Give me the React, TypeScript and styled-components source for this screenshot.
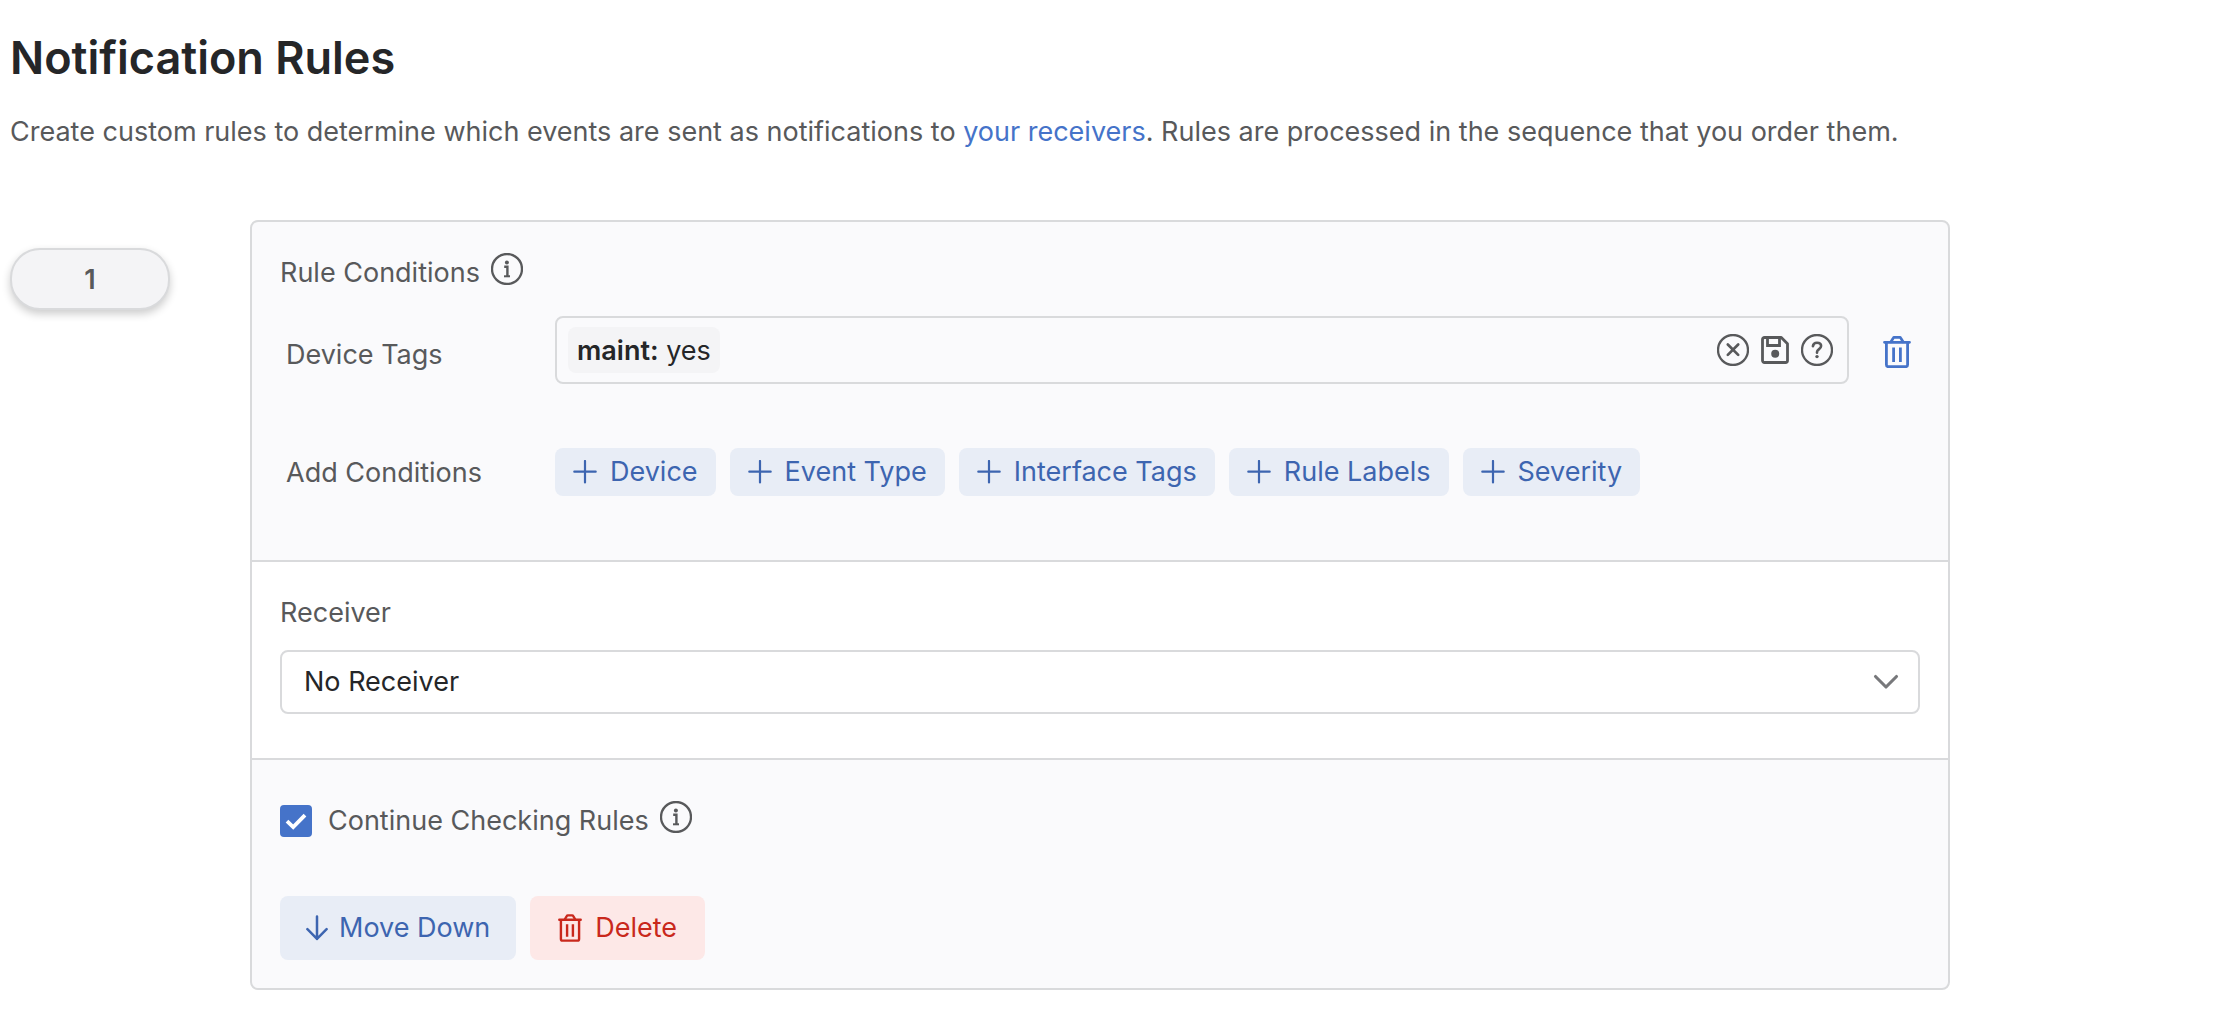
import React, { useState } from "react";
import styled, { createGlobalStyle } from "styled-components";

const color = {
  ink: "#252628",
  text: "#58595b",
  line: "#d9dadc",
  panel: "#fafafc",
  blue: "#4573c9",
  blueText: "#3d65b0",
  blueFill: "#e8edf6",
  redText: "#c9281c",
  redFill: "#fde8e7",
};

const GlobalStyle = createGlobalStyle`
  * { box-sizing: border-box; }
  body {
    margin: 0;
    background: #fff;
    color: ${color.text};
    font-family: Inter, "Liberation Sans", sans-serif;
    font-size: 27px;
    line-height: 40px;
  }
  button, input, select { font: inherit; color: inherit; margin: 0; }
  svg { display: block; flex: none; }
`;

const Page = styled.main`
  padding: 28px 10px;
`;

const Title = styled.h1`
  margin: 0;
  color: ${color.ink};
  font-size: 45px;
  font-weight: 600;
  line-height: 60px;
`;

const Intro = styled.p`
  margin: 24px 0 68px;
`;

const Link = styled.a`
  color: ${color.blue};
  text-decoration: none;
`;

const Rule = styled.article`
  display: flex;
  align-items: flex-start;
  gap: 80px;
`;

const Order = styled.div`
  flex: 0 0 160px;
  margin-top: 28px;
  padding: 10px 10px 8px;
  border: 2px solid ${color.line};
  border-radius: 30px;
  background: #f4f4f6;
  box-shadow: 0 4px 8px rgba(0, 0, 0, 0.2);
  text-align: center;
  font-weight: 600;
`;

const Card = styled.div`
  flex: 1 1 0;
  max-width: 1700px;
  border: 2px solid ${color.line};
  border-radius: 8px;
  background: ${color.panel};
`;

const Section = styled.section<{ $white?: boolean; $pad: string }>`
  padding: ${(p) => p.$pad};
  background: ${(p) => (p.$white ? "#fff" : "transparent")};
  & + & { border-top: 2px solid ${color.line}; }
`;

const Heading = styled.div`
  display: flex;
  align-items: flex-start;
  gap: 11px;
`;

const Row = styled.div<{ $top: number }>`
  display: flex;
  align-items: center;
  margin-top: ${(p) => p.$top}px;
  padding-left: 6px;
`;

const RowLabel = styled.label<{ $drop?: boolean }>`
  flex: 0 0 269px;
  padding-top: ${(p) => (p.$drop ? 10 : 2)}px;
`;

const TagBox = styled.div`
  flex: 1;
  display: flex;
  align-items: center;
  gap: 10px;
  height: 68px;
  padding: 0 14px 0 11px;
  border: 2px solid ${color.line};
  border-radius: 8px;
`;

const Tag = styled.span`
  padding: 4px 9px 2px;
  border-radius: 8px;
  background: #f4f4f6;
  color: ${color.ink};
  b { font-weight: 600; }
`;

const TagInput = styled.input`
  flex: 1;
  min-width: 0;
  border: 0;
  outline: 0;
  background: transparent;
`;

const IconButton = styled.button`
  display: grid;
  place-items: center;
  width: 32px;
  height: 32px;
  padding: 0;
  border: 0;
  background: none;
  color: ${color.text};
  cursor: pointer;
`;

const RemoveButton = styled(IconButton)`
  width: 47px;
  height: 36px;
  margin-left: 24px;
  padding-top: 4px;
  color: ${color.blue};
`;

const Buttons = styled.div<{ $top?: number }>`
  display: flex;
  flex-wrap: wrap;
  gap: 14px;
  margin-top: ${(p) => p.$top ?? 0}px;
`;

const Button = styled.button<{ $danger?: boolean; $large?: boolean }>`
  display: flex;
  align-items: center;
  gap: ${(p) => (p.$danger ? 13 : p.$large ? 11 : 13)}px;
  height: ${(p) => (p.$large ? 64 : 48)}px;
  padding: 0 ${(p) => (p.$danger ? 28 : p.$large ? 26 : 18)}px;
  border: 0;
  border-radius: 8px;
  background: ${(p) => (p.$danger ? color.redFill : color.blueFill)};
  color: ${(p) => (p.$danger ? color.redText : color.blueText)};
  cursor: pointer;
`;

const SelectWrap = styled.div`
  position: relative;
  margin-top: 17px;
  color: #77787b;
  svg {
    position: absolute;
    top: 24px;
    right: 21px;
    pointer-events: none;
  }
`;

const Select = styled.select`
  appearance: none;
  display: block;
  width: 100%;
  height: 64px;
  padding: 0 60px 0 22px;
  border: 2px solid ${color.line};
  border-radius: 8px;
  background: #fff;
  color: ${color.ink};
`;

const CheckLabel = styled.label`
  display: flex;
  align-items: center;
  gap: 16px;
`;

const CheckBox = styled.span`
  display: grid;
  place-items: center;
  color: #fff;
  > * { grid-area: 1 / 1; }
  svg { pointer-events: none; }
`;

const Check = styled.input`
  appearance: none;
  width: 32px;
  height: 32px;
  border: 2px solid ${color.blue};
  border-radius: 4px;
  background: #fff;
  &:checked { background: ${color.blue}; }
`;

const stroke = {
  fill: "none",
  stroke: "currentColor",
  strokeWidth: 2,
  strokeLinecap: "round" as const,
  strokeLinejoin: "round" as const,
  "aria-hidden": true,
};

const InfoIcon = () => (
  <svg width="32" height="32" viewBox="0 0 32 32" {...stroke}>
    <circle cx="16" cy="16" r="15" strokeWidth="2.3" />
    <circle cx="15.9" cy="9.6" r="2" fill="currentColor" stroke="none" />
    <path d="M13.2 13.7h3.2v9.4" strokeLinecap="butt" strokeLinejoin="miter" strokeWidth="2.4" />
    <path d="M13 23.3h6" strokeLinecap="butt" strokeWidth="2" />
  </svg>
);

const ClearIcon = () => (
  <svg width="32" height="32" viewBox="0 0 32 32" {...stroke}>
    <circle cx="16" cy="16" r="15" strokeWidth="2.3" />
    <path d="M10.8 10.5l10.4 10.4M21.2 10.5L10.8 20.9" strokeWidth="2.7" />
  </svg>
);

const SaveIcon = () => (
  <svg width="28" height="28" viewBox="0 0 28 28" {...stroke} strokeWidth="2.8">
    <path d="M1.5 3.5a2 2 0 0 1 2-2h16.8l6.2 6.2v16.8a2 2 0 0 1-2 2h-21a2 2 0 0 1-2-2z" />
    <path d="M6.5 1.8v7.7h12V1.8" strokeLinejoin="miter" />
    <circle cx="14.2" cy="17.8" r="4" fill="currentColor" stroke="none" />
  </svg>
);

const HelpIcon = () => (
  <svg width="32" height="32" viewBox="0 0 32 32" {...stroke}>
    <circle cx="16" cy="16" r="15" strokeWidth="2.3" />
    <path d="M11.9 12.2c.3-2.2 1.9-3.4 4.1-3.4 2.4 0 4.1 1.3 4.1 3.3 0 3-4.1 3-4.1 6v.6" strokeWidth="2.6" />
    <circle cx="16" cy="22.6" r="1.7" fill="currentColor" stroke="none" />
  </svg>
);

const TrashIcon = ({ width = 28, height = 32 }: { width?: number; height?: number }) => (
  <svg width={width} height={height} viewBox="0 0 28 32" {...stroke} strokeWidth="2.8">
    <path d="M1.5 6.3h25M3.4 6.5v22.2a2 2 0 0 0 2 2h17.2a2 2 0 0 0 2-2V6.5" />
    <path d="M8 5.8l2.2-3.7a1.5 1.5 0 0 1 1.3-.8h5a1.5 1.5 0 0 1 1.3.8L20 5.8" />
    <path d="M10.6 11.5v14.6M17.4 11.5v14.6" strokeLinecap="butt" />
  </svg>
);

const PlusIcon = () => (
  <svg width="24" height="24" viewBox="0 0 24 24" {...stroke} strokeWidth="2.2">
    <path d="M12 1v21.4M1.3 11.7h21.4" />
  </svg>
);

const ArrowDownIcon = () => (
  <svg width="22" height="26" viewBox="0 0 22 26" {...stroke} strokeWidth="2.5">
    <path d="M11 1.5v22.5M1.4 14.2L11 23.8l9.6-9.6" />
  </svg>
);

const ChevronIcon = () => (
  <svg width="26" height="16" viewBox="0 0 26 16" {...stroke} strokeWidth="3.1">
    <path d="M2.5 2.5L13 13 23.5 2.5" />
  </svg>
);

const CheckIcon = () => (
  <svg width="32" height="32" viewBox="0 0 32 32" {...stroke} strokeWidth="3.8" strokeLinecap="butt" strokeLinejoin="miter">
    <path d="M7 16.2l6.2 5.9L25 10.2" />
  </svg>
);

const conditions = ["Device", "Event Type", "Interface Tags", "Rule Labels", "Severity"];

export default function App() {
  const [keepChecking, setKeepChecking] = useState(true);

  return (
    <>
      <GlobalStyle />
      <Page>
        <Title>Notification Rules</Title>
        <Intro>
          Create custom rules to determine which events are sent as notifications to{" "}
          <Link href="#receivers">your receivers</Link>. Rules are processed in the sequence that you order them.
        </Intro>
        <Rule>
          <Order>1</Order>
          <Card>
            <Section $pad="31px 28px 64px">
              <Heading>
                Rule Conditions
                <InfoIcon />
              </Heading>
              <Row $top={23}>
                <RowLabel htmlFor="device-tags" $drop>Device Tags</RowLabel>
                <TagBox>
                  <Tag><b>maint:</b> yes</Tag>
                  <TagInput id="device-tags" type="text" />
                  <IconButton type="button" aria-label="Clear"><ClearIcon /></IconButton>
                  <IconButton type="button" aria-label="Save"><SaveIcon /></IconButton>
                  <IconButton type="button" aria-label="Help"><HelpIcon /></IconButton>
                </TagBox>
                <RemoveButton type="button" aria-label="Remove condition"><TrashIcon /></RemoveButton>
              </Row>
              <Row $top={64}>
                <RowLabel as="span">Add Conditions</RowLabel>
                <Buttons>
                  {conditions.map((name) => (
                    <Button type="button" key={name}>
                      <PlusIcon />
                      {name}
                    </Button>
                  ))}
                </Buttons>
              </Row>
            </Section>
            <Section $white $pad="31px 28px 44px">
              <label htmlFor="receiver">Receiver</label>
              <SelectWrap>
                <Select id="receiver" defaultValue="none">
                  <option value="none">No Receiver</option>
                </Select>
                <ChevronIcon />
              </SelectWrap>
            </Section>
            <Section $pad="41px 28px 28px">
              <Heading>
                <CheckLabel>
                  <CheckBox>
                    <Check
                      type="checkbox"
                      checked={keepChecking}
                      onChange={(e) => setKeepChecking(e.target.checked)}
                    />
                    <CheckIcon />
                  </CheckBox>
                  Continue Checking Rules
                </CheckLabel>
                <InfoIcon />
              </Heading>
              <Buttons $top={55}>
                <Button type="button" $large>
                  <ArrowDownIcon />
                  Move Down
                </Button>
                <Button type="button" $large $danger>
                  <TrashIcon width={24} height={28} />
                  Delete
                </Button>
              </Buttons>
            </Section>
          </Card>
        </Rule>
      </Page>
    </>
  );
}
